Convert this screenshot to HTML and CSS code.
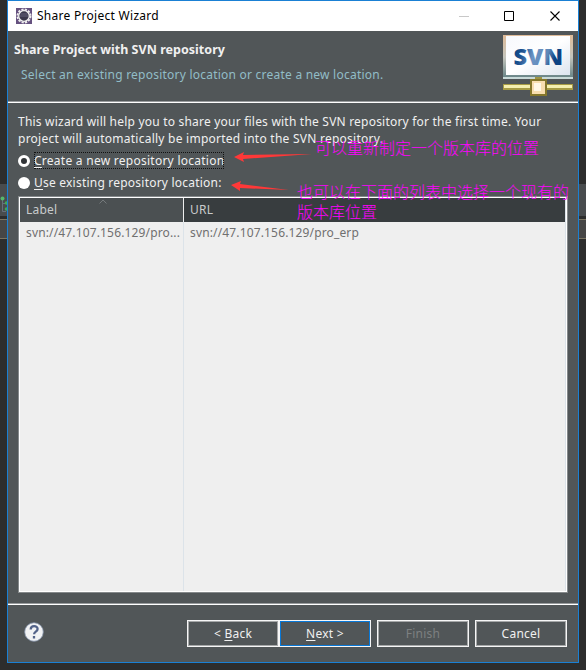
FILE: index.html
```html
<!DOCTYPE html>
<html lang="en">
<head>
<meta charset="utf-8">
<title>Share Project Wizard</title>
<link rel="stylesheet" href="styles.css">
</head>
<body>
<div class="backdrop">
  <div class="strip"></div>
  <div class="editor"></div>
  <svg class="tree" width="7" height="20" viewBox="0 0 7 20"><path d="M2.500 4v11.500H6M2.500 7.500H6" fill="none" stroke="#66717b"/><circle cx="2.500" cy="2.500" r="2" fill="#55b86b"/><circle cx="6.500" cy="7" r="1.800" fill="#40a85a"/><circle cx="6.500" cy="13" r="1.800" fill="#40a85a"/></svg>
</div>
<main class="window">
  <header class="titlebar">
    <svg class="app-icon" width="16" height="16" viewBox="0 0 16 16"><rect width="16" height="16" fill="#65517f"/><circle cx="8" cy="8" r="6.500" fill="none" stroke="#eee" stroke-width="2" stroke-dasharray="2.200 1.200"/><circle cx="8" cy="8" r="5.300" fill="#39364b" stroke="#f2f2f2" stroke-width="1.300"/><path d="M4 8h8M4.500 6h7" stroke="#66627c"/></svg>
    <span class="title">Share Project Wizard</span>
    <svg class="controls" width="108" height="12" viewBox="0 0 108 12"><path d="M0 6.500h10" stroke="#c8c8c8"/><path d="M45.500 1.500h9v9h-9z" fill="none" stroke="#000"/><path d="M91.500 1.500l9 9M100.500 1.500l-9 9" stroke="#000" stroke-width="1.100"/></svg>
  </header>
  <section class="banner">
    <div>
      <h1>Share Project with SVN repository</h1>
      <p>Select an existing repository location or create a new location.</p>
    </div>
    <svg class="svn" width="70" height="62" viewBox="0 0 70 62">
      <defs>
        <linearGradient id="frame" x2="0" y2="1"><stop stop-color="#dfbb98"/><stop offset=".5" stop-color="#c4c5bd"/><stop offset="1" stop-color="#628083"/></linearGradient>
        <linearGradient id="screen" x2="1" y2="1"><stop stop-color="#f7f9fd"/><stop offset=".5" stop-color="#fff"/><stop offset="1" stop-color="#dce4ef"/></linearGradient>
        <linearGradient id="ink" gradientUnits="userSpaceOnUse" x1="12" y1="14" x2="58" y2="28"><stop stop-color="#0c4583"/><stop offset=".15" stop-color="#1b5190"/><stop offset=".4" stop-color="#6c94c4"/><stop offset=".68" stop-color="#5f88b8"/><stop offset=".85" stop-color="#0d4384"/></linearGradient>
      </defs>
      <path d="M0 0h70v44H0z" fill="url(#frame)"/><path d="M0 43h70" stroke="#c8d9d8" stroke-width="2"/>
      <path d="M3 1h64v39H3z" fill="url(#screen)"/>
      <text x="10.500" y="29.500" textLength="49.500" lengthAdjust="spacingAndGlyphs" fill="url(#ink)">SVN</text>
      <path d="M32 42h7v4h-7z" fill="#9c9444"/>
      <path d="M0 49h70v6H0z" fill="#a69b45"/><path d="M1 50h68v3H1z" fill="#f5efb0"/>
      <path d="M27 44h17v17H27z" fill="#85772c"/><path d="M29 46h13v13H29z" fill="#f8deb0"/><path d="M31 48h7v8h-7z" fill="#fff7e6"/>
    </svg>
  </section>
  <section class="content">
    <p class="intro"><span class="line1">This wizard will help you to share your files with the SVN repository for the first time. Your</span><br><span class="line2">project will automatically be imported into the SVN repository.</span></p>
    <label class="option"><i class="radio selected"></i><span class="focus"><u>C</u>reate a new repository location</span></label>
    <label class="option second"><i class="radio"></i><span><u>U</u>se existing repository location:</span></label>
    <div class="table">
      <div class="col first"><div class="th">Label<svg class="sort" width="8" height="5" viewBox="0 0 8 5"><path d="M.5 4.500L4 1l3.500 3.500" fill="none" stroke="#74797b"/></svg></div><div class="td">svn://47.107.156.129/pro...</div></div>
      <div class="col rest"><div class="th">URL</div><div class="td">svn://47.107.156.129/pro_erp</div></div>
    </div>
  </section>
  <footer class="footer">
    <svg class="help" width="20" height="20" viewBox="0 0 20 20"><circle cx="10" cy="10" r="9.300" fill="#f1f2f4" stroke="#8190aa" stroke-width=".8"/><path d="M6.700 7.400C6.700 3 13.600 3.100 13.600 7c0 2.800-3.500 2.500-3.500 5.200M10 14v2.500" fill="none" stroke="#536389" stroke-width="2.300"/></svg>
    <div class="button">&lt; <u>B</u>ack</div><div class="button next"><u>N</u>ext &gt;</div><div class="button finish">Finish</div><div class="button cancel">Cancel</div>
  </footer>
</main>
<svg class="arrow arrow-one" width="78" height="12" viewBox="0 0 78 12"><path d="M0 6L10 1 9 4 78 3 9 8l1 3z" fill="#ff3838"/></svg>
<svg class="arrow arrow-two" width="58" height="13" viewBox="0 0 58 13"><path d="M0 4L10 0 9 3 58 9 9 7l0 3z" fill="#ff3838"/></svg>
<div class="note note-one">可以重新制定一个版本库的位置</div>
<div class="note note-two">也可以在下面的列表中选择一个现有的<br>版本库位置</div>
</body>
</html>
```
FILE: styles.css
```css
* { box-sizing: border-box; }
body { margin: 0; width: 586px; height: 670px; overflow: hidden; background: #2d2d2d; font: 12px/17px "Noto Sans", "Noto Sans CJK SC", sans-serif; color: #f0f0f0; position: relative; }
h1, p { margin: 0; font-size: inherit; }
u { text-underline-offset: 2px; text-decoration-thickness: 1px; text-decoration-skip-ink: none; }
svg { display: block; flex: none; }
.backdrop { position: absolute; inset: 0; padding-top: 184px; }
.strip { height: 32px; background: #494c4e; }
.editor { margin-top: 3px; height: 20px; border: solid #7b7562; border-width: 1px 0; background: #464646; }
.tree { position: absolute; left: 0; top: 196px; }
.window { position: relative; margin-left: 7px; width: 572px; height: 663px; border: 1px solid #1a80d4; background: #515658; display: flex; flex-direction: column; }
.titlebar { height: 30px; background: #fff; color: #000; display: flex; align-items: center; padding: 0 11px 0 8px; }
.title { margin-left: 5px; margin-top: -1px; letter-spacing: .28px; }
.controls { margin-left: auto; }
.banner { height: 72px; border-bottom: 1px solid #fff; box-shadow: inset 0 -1px #999c9e; display: flex; justify-content: space-between; padding: 4px 5px 0 6px; }
.banner h1 { margin-top: 6px; font-size: 12.5px; letter-spacing: .03px; }
.banner p { margin: 8px 0 0 7px; color: #91bdc7; letter-spacing: .23px; }
.svn text { font: 900 23px "Noto Sans", sans-serif; }
.content { height: 500px; padding: 10px 10px 0; }
.intro { height: 39px; white-space: nowrap; }
.line1 { letter-spacing: .21px; }
.line2 { letter-spacing: .25px; }
.option { height: 17px; display: flex; align-items: center; letter-spacing: .26px; }
.second { margin-top: 5px; }
.second span { letter-spacing: .22px; }
.radio { width: 12px; height: 12px; border-radius: 50%; background: #fff; margin-right: 4px; }
.selected { border: 3px solid #fff; background: #303437; }
.focus { outline: 1px dotted #111; outline-offset: -1px; }
.table { margin-top: 5px; width: 550px; height: 397px; border: 1px solid #85898b; box-shadow: inset 0 0 0 1px #fff; background: #efefef; display: flex; padding: 1px; color: #707070; }
.col { border-right: 1px solid #dce3e9; }
.first { width: 164px; }
.rest { flex: 1; }
.th { height: 24px; padding: 3px 6px; background: #383d3f; color: #c8cbcc; position: relative; letter-spacing: .2px; }
.first .th { background: #4b5052; width: 164px; border-right: 1px solid #eee; }
.sort { position: absolute; left: 79px; top: 1px; }
.td { padding: 2px 6px; white-space: nowrap; letter-spacing: .15px; }
.footer { flex: 1; border-top: 1px solid #989b9d; box-shadow: inset 0 1px #fff; padding: 16px 11px 0 16px; display: flex; }
.help { margin: 2px 143px 0 0; }
.button { width: 92px; height: 27px; border: 1px solid #f6f6f6; box-shadow: inset 0 0 0 1px #a5a7a8; display: flex; align-items: center; justify-content: center; white-space: pre; letter-spacing: .25px; }
.next { box-shadow: inset 0 0 0 1px #0878d8; }
.finish { margin: 0 6px; color: #7d8081; }
.arrow { position: absolute; }
.arrow-one { left: 234px; top: 151px; }
.arrow-two { left: 231px; top: 181px; }
.note { position: absolute; color: #ff00ff; font: 300 16px/20px "Noto Sans CJK SC", sans-serif; white-space: nowrap; }
.note-one { left: 315px; top: 137px; }
.note-two { left: 297px; top: 181px; }
```
